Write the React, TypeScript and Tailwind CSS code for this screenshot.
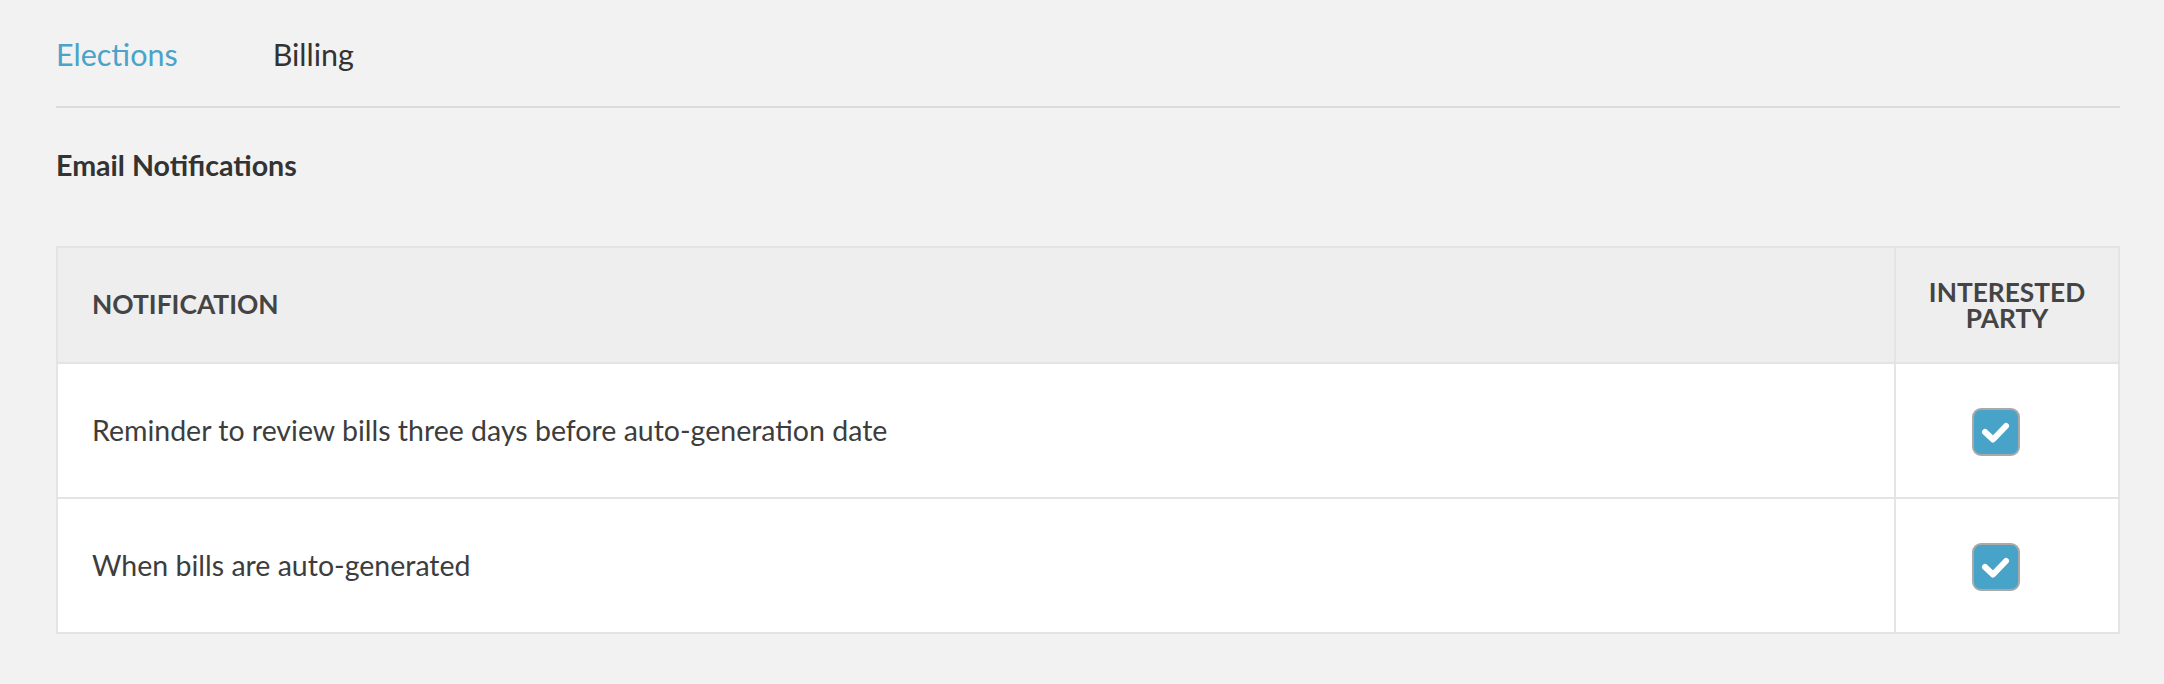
// App.tsx - Notification settings: tabs, heading and a two-column table

const rows = [
  { id: "review", label: "Reminder to review bills three days before auto-generation date", checked: true },
  { id: "generated", label: "When bills are auto-generated", checked: true },
];

function CheckBox({ checked }: { checked: boolean }) {
  return (
    <span className="inline-flex h-[48px] w-[48px] items-center justify-center rounded-[9px] border-2 border-[#a9a9a9] bg-[#47a3c7]">
      {checked && (
        <svg width="44" height="44" viewBox="0 0 44 44" fill="none">
          <polyline
            points="11,22 19,29.5 32,16"
            stroke="#fff"
            strokeWidth="6"
            strokeLinecap="round"
            strokeLinejoin="round"
          />
        </svg>
      )}
    </span>
  );
}

export default function App() {
  return (
    <div
      className="min-h-screen bg-[#f2f2f2] pl-[56px] pr-[44px] text-[#333]"
      style={{ fontFamily: "Lato, 'Noto Sans', sans-serif" }}
    >
      {/* Tabs */}
      <div className="flex h-[106px] items-center gap-[95px] pt-[4px] text-[30.5px]">
        <span className="text-[#4aa3c8]">Elections</span>
        <span className="text-[#333]">Billing</span>
      </div>
      <div className="h-[2px] bg-[#dcdcdc]" />

      {/* Section heading */}
      <h2 className="mt-[43px] mb-[67px] text-[28.6px] font-bold leading-[28px] text-[#333]">
        Email Notifications
      </h2>

      {/* Notifications table */}
      <table className="w-full border-collapse border-2 border-[#e4e4e4]">
        <thead>
          <tr className="h-[116px] bg-[#eeeeee]">
            <th className="border-2 border-[#e4e4e4] pl-[34px] text-left text-[26.4px] font-bold uppercase text-[#444]">
              Notification
            </th>
            <th className="w-[224px] border-2 border-[#e4e4e4] text-center text-[26.3px] font-bold uppercase leading-[26px] text-[#444]">
              Interested
              <br />
              Party
            </th>
          </tr>
        </thead>
        <tbody>
          {rows.map((row) => (
            <tr key={row.id} className="h-[135px] bg-white">
              <td className="border-2 border-[#e4e4e4] pl-[34px] text-[28.5px] text-[#3d3d3d]">
                {row.label}
              </td>
              <td className="border-2 border-[#e4e4e4] pt-[7px] text-center align-middle">
                <span className="inline-flex pr-[22px]">
                  <CheckBox checked={row.checked} />
                </span>
              </td>
            </tr>
          ))}
        </tbody>
      </table>
    </div>
  );
}
